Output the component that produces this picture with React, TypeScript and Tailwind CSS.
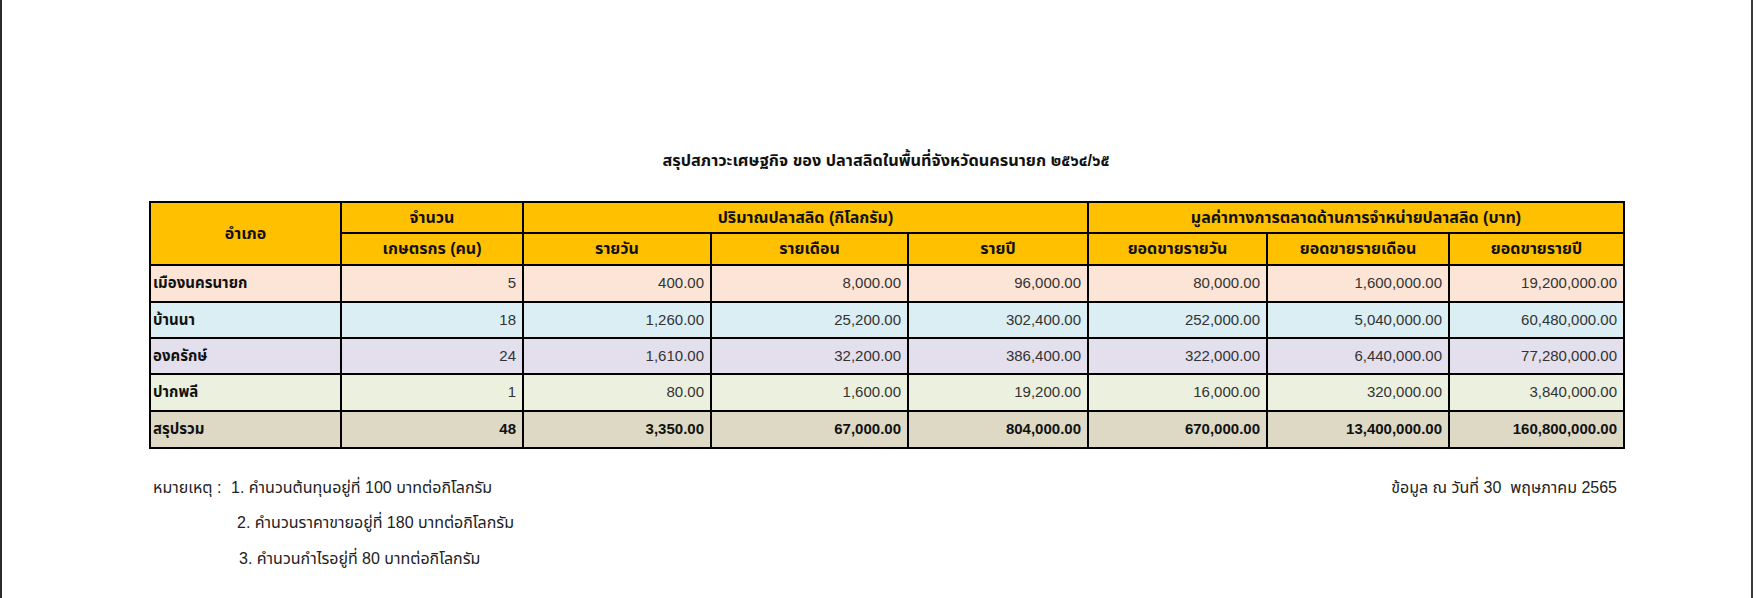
import React from "react";

type Row = {
  name: string;
  farmers: string;
  vals: string[];
  bg: string;
  total?: boolean;
};

const rows: Row[] = [
  {
    name: "เมืองนครนายก",
    farmers: "5",
    vals: ["400.00", "8,000.00", "96,000.00", "80,000.00", "1,600,000.00", "19,200,000.00"],
    bg: "bg-[#fce4d6]",
  },
  {
    name: "บ้านนา",
    farmers: "18",
    vals: ["1,260.00", "25,200.00", "302,400.00", "252,000.00", "5,040,000.00", "60,480,000.00"],
    bg: "bg-[#daeef3]",
  },
  {
    name: "องครักษ์",
    farmers: "24",
    vals: ["1,610.00", "32,200.00", "386,400.00", "322,000.00", "6,440,000.00", "77,280,000.00"],
    bg: "bg-[#e4dfec]",
  },
  {
    name: "ปากพลี",
    farmers: "1",
    vals: ["80.00", "1,600.00", "19,200.00", "16,000.00", "320,000.00", "3,840,000.00"],
    bg: "bg-[#ebf1de]",
  },
  {
    name: "สรุปรวม",
    farmers: "48",
    vals: ["3,350.00", "67,000.00", "804,000.00", "670,000.00", "13,400,000.00", "160,800,000.00"],
    bg: "bg-[#ddd9c4]",
    total: true,
  },
];

const font = "font-['Liberation_Sans','Noto_Sans_Thai','Noto_Sans','DejaVu_Sans',sans-serif]";

export default function App() {
  return (
    <div className={`w-[1756px] h-[598px] bg-white overflow-hidden ${font}`}>
      <div className="w-[1753px] h-full border-l-2 border-r-2 border-l-[#2b2b2b] border-r-[#3a3a3a] flex flex-col">
        <div className="pl-[147px] pt-[149px] w-[1621px]">
          <div className="w-[1474px] h-[22px] flex items-center justify-center text-[16.3px] font-bold text-[#111]">
            สรุปสภาวะเศษฐกิจ ของ ปลาสลิดในพื้นที่จังหวัดนครนายก ๒๕๖๔/๖๕
          </div>
          <table className="mt-[30px] w-[1474px] table-fixed border-collapse border-2 border-black text-[15px]">
            <colgroup>
              <col className="w-[191px]" />
              <col className="w-[182px]" />
              <col className="w-[188px]" />
              <col className="w-[197px]" />
              <col className="w-[180px]" />
              <col className="w-[179px]" />
              <col className="w-[182px]" />
              <col className="w-[175px]" />
            </colgroup>
            <thead className="text-[16px]">
              <tr className="h-[31px] bg-[#ffc000]">
                <th rowSpan={2} className="border-2 border-black font-bold text-[#111] text-center align-middle p-0">
                  อำเภอ
                </th>
                <th className="border-2 border-black font-bold text-[#111] text-center p-0">จำนวน</th>
                <th colSpan={3} className="border-2 border-black font-bold text-[#111] text-center p-0">
                  ปริมาณปลาสลิด (กิโลกรัม)
                </th>
                <th colSpan={3} className="border-2 border-black font-bold text-[#111] text-center p-0">
                  มูลค่าทางการตลาดด้านการจำหน่ายปลาสลิด (บาท)
                </th>
              </tr>
              <tr className="h-[32px] bg-[#ffc000]">
                <th className="border-2 border-black font-bold text-[#111] text-center p-0">เกษตรกร (คน)</th>
                <th className="border-2 border-black font-bold text-[#111] text-center p-0">รายวัน</th>
                <th className="border-2 border-black font-bold text-[#111] text-center p-0">รายเดือน</th>
                <th className="border-2 border-black font-bold text-[#111] text-center p-0">รายปี</th>
                <th className="border-2 border-black font-bold text-[#111] text-center p-0">ยอดขายรายวัน</th>
                <th className="border-2 border-black font-bold text-[#111] text-center p-0">ยอดขายรายเดือน</th>
                <th className="border-2 border-black font-bold text-[#111] text-center p-0">ยอดขายรายปี</th>
              </tr>
            </thead>
            <tbody>
              {rows.map((r, i) => (
                <tr key={r.name} className={`${i === 1 || i === 2 ? "h-[36px]" : "h-[37px]"} ${r.bg}`}>
                  <td className="border-2 border-black pl-[2px] pr-0 py-0 text-left font-bold text-[#111] whitespace-nowrap">
                    {r.name}
                  </td>
                  <td
                    className={`border-2 border-black pr-[6px] pl-0 py-0 text-right ${
                      r.total ? "font-bold text-[#111]" : "text-[#333]"
                    }`}
                  >
                    {r.farmers}
                  </td>
                  {r.vals.map((v, j) => (
                    <td
                      key={j}
                      className={`border-2 border-black pr-[6px] pl-0 py-0 text-right ${
                        r.total ? "font-bold text-[#111]" : "text-[#333]"
                      }`}
                    >
                      {v}
                    </td>
                  ))}
                </tr>
              ))}
            </tbody>
          </table>
          <div className="mt-[21px] w-[1474px] flex justify-between text-[16px] text-[#222]">
            <div className="flex flex-col pl-[4px]">
              <div className="h-[35px] flex items-center">
                <span className="w-[78px]">หมายเหตุ :</span>
                <span>1. คำนวนต้นทุนอยู่ที่ 100 บาทต่อกิโลกรัม</span>
              </div>
              <div className="h-[36px] flex items-center pl-[84px]">2. คำนวนราคาขายอยู่ที่ 180 บาทต่อกิโลกรัม</div>
              <div className="h-[35px] flex items-center pl-[86px]">3. คำนวนกำไรอยู่ที่ 80 บาทต่อกิโลกรัม</div>
            </div>
            <div className="h-[35px] flex items-center pr-[6px]">ข้อมูล ณ วันที่ 30&nbsp; พฤษภาคม 2565</div>
          </div>
        </div>
      </div>
    </div>
  );
}
